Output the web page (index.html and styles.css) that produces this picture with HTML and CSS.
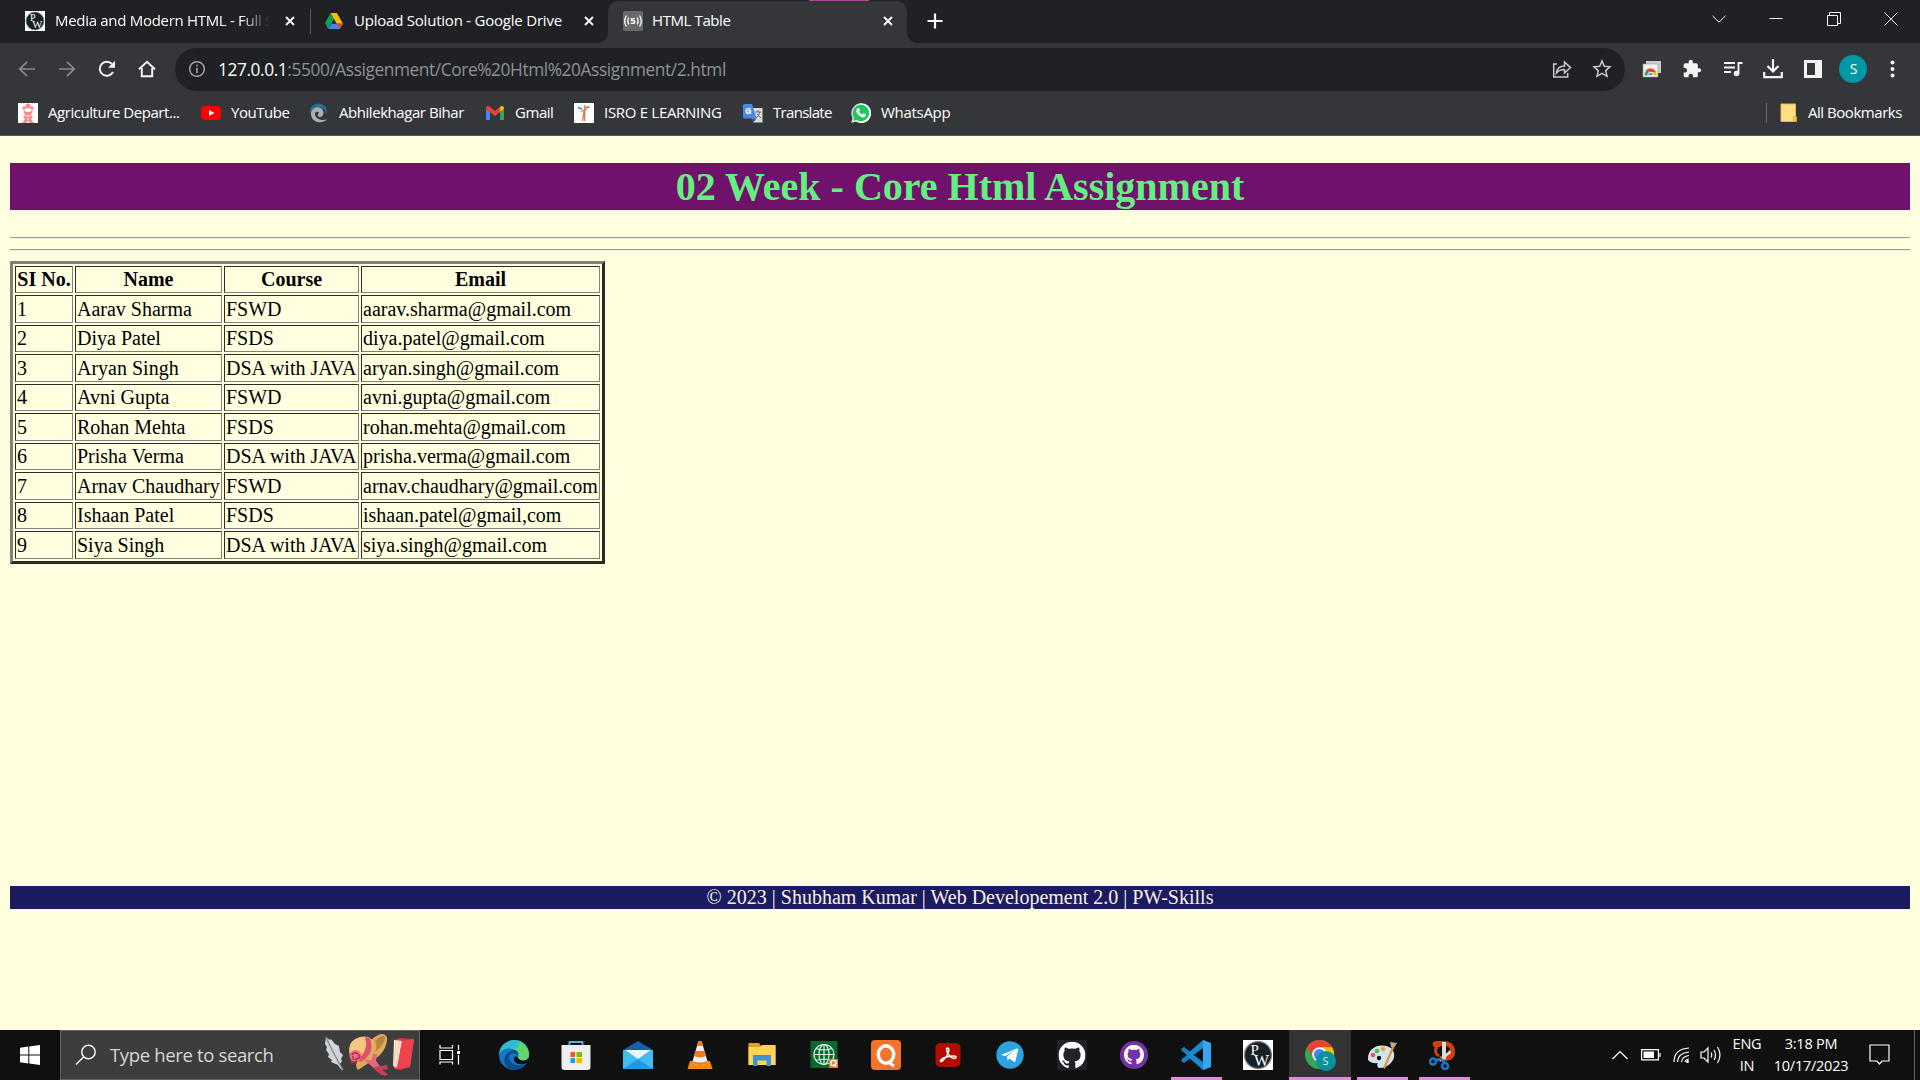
FILE: index.html
```html
<!DOCTYPE html>
<html lang="en">
<head>
<meta charset="utf-8">
<title>HTML Table</title>
<link rel="stylesheet" href="styles.css">
</head>
<body>
<svg class="defs" width="0" height="0" aria-hidden="true">
  <symbol id="pw" viewBox="0 0 30 30"><path fill="#fff" d="M0 0h30v30H0z"/><circle cx="15" cy="15" r="13.4" fill="#172026" stroke="#777" stroke-width="1.3"/><text x="7.500" y="14.500" class="pw-letter" font-size="15">P</text><text x="11" y="25.500" class="pw-letter" font-size="16">W</text></symbol>
  <symbol id="close" viewBox="0 0 10 10"><path d="M1 1l8 8M9 1L1 9" stroke="currentColor" stroke-width="1.8" fill="none"/></symbol>
  <symbol id="github" viewBox="0 0 16 16"><path fill="#fff" d="M8 0C3.58 0 0 3.58 0 8c0 3.54 2.29 6.53 5.47 7.59.4.07.55-.17.55-.38v-1.33c-2.23.48-2.7-1.07-2.7-1.07-.36-.93-.89-1.17-.89-1.17-.73-.5.05-.49.05-.49.8.06 1.23.83 1.23.83.71 1.22 1.87.87 2.33.66.07-.52.28-.87.5-1.07-1.77-.2-3.64-.89-3.64-3.95 0-.87.31-1.59.82-2.15-.08-.2-.36-1.02.08-2.12 0 0 .67-.21 2.2.82a7.6 7.6 0 0 1 4 0c1.53-1.04 2.2-.82 2.2-.82.44 1.1.16 1.92.08 2.12.51.56.82 1.27.82 2.15 0 3.07-1.87 3.75-3.65 3.95.29.25.54.73.54 1.48v2.16c0 .21.15.46.55.38A8 8 0 0 0 16 8c0-4.42-3.58-8-8-8z"/></symbol>
  <symbol id="chrome" viewBox="0 0 32 32"><circle cx="16" cy="16" r="15" fill="#34a853"/><path fill="#ea4335" d="M3 8.5A15 15 0 0 1 29 8.5H16L9.5 19.7z"/><path fill="#fbbc04" d="M29 8.5A15 15 0 0 1 16 31l6.5-11.3L16 8.5z"/><circle cx="16" cy="16" r="7.5" fill="#fff"/><circle cx="16" cy="16" r="5.8" fill="#4285f4"/></symbol>
</svg>

<header class="browser">
  <div class="tabstrip">
    <div class="tab tab-one">
      <svg width="20" height="20"><use href="#pw"/></svg>
      <span class="tab-title fade">Media and Modern HTML - Full S</span>
      <svg class="tab-close" width="10" height="10"><use href="#close"/></svg>
    </div>
    <div class="tab tab-two">
      <svg width="20" height="20" viewBox="0 0 20 20"><path fill="#0f9d58" d="M6.7 2L1 12l3.2 6L10 7.7z"/><path fill="#fbbc04" d="M6.7 2h6.2l6.1 10.7h-6.3z"/><path fill="#4285f4" d="M4.2 18L7.4 12.7H19L15.8 18z"/><path fill="#ea4335" d="M19 12.7L15.8 18l-3.1-5.3z"/></svg>
      <span class="tab-title t2">Upload Solution - Google Drive</span>
      <svg class="tab-close" width="10" height="10"><use href="#close"/></svg>
    </div>
    <div class="tab tab-active">
      <svg width="20" height="20" viewBox="0 0 20 20"><rect width="20" height="20" rx="2" fill="#696969"/><text x="7.2" y="13.200" font-size="9.500" font-weight="700" fill="#fff">5</text><path d="M5.800 6.500q-1.800 3.500 0 7M14.200 6.500q1.800 3.500 0 7M3.500 4.500q-3.700 5.500 0 11M16.500 4.500q3.700 5.500 0 11" fill="none" stroke="#fff" stroke-width="1.300"/></svg>
      <span class="tab-title t3">HTML Table</span>
      <svg class="tab-close" width="10" height="10"><use href="#close"/></svg>
      <i class="accent"></i>
    </div>
    <svg class="new-tab" width="16" height="16" viewBox="0 0 16 16"><path d="M8 .5v15M.5 8h15" stroke="#fff" stroke-width="2.2"/></svg>
    <div class="window-controls">
      <svg width="14" height="14" viewBox="0 0 14 14"><path d="M.5 3.8L7 10.2l6.500-6.400"/></svg>
      <svg width="14" height="14" viewBox="0 0 14 14"><path d="M.5 6.500h13"/></svg>
      <svg width="14" height="14" viewBox="0 0 14 14"><path d="M.5 3.500h10v10H.5zM2.500 3.500v-3h11v11h-3"/></svg>
      <svg width="14" height="14" viewBox="0 0 14 14"><path d="M.5.5l13 13M13.500.5l-13 13"/></svg>
    </div>
  </div>

  <div class="toolbar">
    <nav class="nav">
      <svg class="dim" width="18" height="18" viewBox="0 0 18 18"><path d="M17 9H2M9 1.800L1.800 9 9 16.200"/></svg>
      <svg class="dim" width="18" height="18" viewBox="0 0 18 18"><path d="M1 9h15M9 1.800L16.200 9 9 16.200"/></svg>
      <svg width="18" height="18" viewBox="0 0 18 18"><path d="M15 12a7 7 0 1 1-1-8"/><path class="solid" d="M17 .8v7h-7z"/></svg>
      <svg width="18" height="18" viewBox="0 0 18 18"><path d="M1 9.200L9 1.800l8 7.400M3.800 8v8.300h10.400V8"/></svg>
    </nav>
    <div class="omnibox">
      <svg width="18" height="18" viewBox="0 0 18 18"><circle cx="9" cy="9" r="7.300" fill="none" stroke="#a0a3a8" stroke-width="1.500"/><path d="M9 8v5M9 4.800v1.700" stroke="#a0a3a8" stroke-width="1.700"/></svg>
      <span class="url"><b>127.0.0.1</b>:5500/Assigenment/Core%20Html%20Assignment/2.html</span>
      <svg class="share" width="20" height="20" viewBox="0 0 20 20"><path d="M5 5H1.700v13h14v-4M4.500 14c.5-4.500 3.500-7 8-7V3l6 5.600-6 5.400v-3.500c-3.800 0-6 .8-8 3.500z"/></svg>
      <svg width="20" height="20" viewBox="0 0 20 20"><path d="M10 2l2.300 5.300 5.700.5-4.300 3.800 1.300 5.700-5-3-5 3 1.300-5.700L2 7.800l5.700-.5z"/></svg>
    </div>
    <div class="actions">
      <svg width="20" height="20" viewBox="0 0 20 20"><path d="M4 2h15v12H4z" fill="#ccc"/><path d="M1 5h15v13H1z" fill="#f2f2f2" stroke="#999" stroke-width=".6"/><path d="M2.500 16.500a6 6 0 0 1 3-5.500l3 5.500z" fill="#34a853"/><path d="M3.500 12a6 6 0 0 1 10.500 1H8.500z" fill="#ea4335"/><path d="M14 13q1 1.500.8 3.500h-5l-1-3.500z" fill="#fbbc04"/><path d="M5.700 16.500a3 3 0 0 1 6 0z" fill="#4285f4" stroke="#fff"/></svg>
      <svg width="20" height="20" viewBox="0 0 24 24"><path fill="#f1f3f4" d="M20.500 11H19V7a2 2 0 0 0-2-2h-4V3.500a2.500 2.500 0 0 0-5 0V5H4a2 2 0 0 0-2 2v3.800h1.500a2.700 2.700 0 0 1 0 5.400H2V20a2 2 0 0 0 2 2h3.800v-1.500a2.700 2.700 0 0 1 5.400 0V22H17a2 2 0 0 0 2-2v-4h1.500a2.500 2.500 0 0 0 0-5z"/></svg>
      <svg width="20" height="20" viewBox="0 0 20 20"><path d="M1 4h11M1 8.500h11M1 13h7M15.500 14V4h4" fill="none" stroke="#f1f3f4" stroke-width="1.900"/><circle cx="13.500" cy="14.500" r="2.800" fill="#f1f3f4"/></svg>
      <svg width="20" height="20" viewBox="0 0 20 20"><path d="M10 0v12M4.500 7l5.500 5.500L15.500 7M1.200 13v5.200h17.600V13" fill="none" stroke="#f1f3f4" stroke-width="2.200"/></svg>
      <svg width="20" height="20" viewBox="0 0 20 20"><path d="M1 1h18v18H1z" fill="#f1f3f4"/><path d="M4 4h8v12H4z" fill="#35363a"/></svg>
      <span class="avatar">S</span>
      <svg width="20" height="20" viewBox="0 0 20 20" fill="#f1f3f4"><circle cx="8.500" cy="3.500" r="2"/><circle cx="8.500" cy="10" r="2"/><circle cx="8.500" cy="16.500" r="2"/></svg>
    </div>
  </div>

  <div class="bookmarks">
    <span class="bm b1"><svg width="20" height="20" viewBox="0 0 20 20"><path fill="#fff" d="M0 0h20v20H0z"/><g fill="#f88b8b"><circle cx="10" cy="3" r="2.500"/><circle cx="6" cy="5" r="1.800"/><circle cx="14" cy="5" r="1.800"/><path d="M5 7q5 3 10 0l-2 5 2 2-2 2 3 4h-4l-2-2-2 2H4l3-4-2-2 2-2z"/></g><path d="M8 8.500h4M7.500 13h5M9 16h2" stroke="#fff"/></svg><span>Agriculture Depart...</span></span>
    <span class="bm b2"><svg width="20" height="20" viewBox="0 0 20 20"><rect y="3" width="20" height="14" rx="4" fill="#f00"/><path d="M8 7l5.500 3L8 13z" fill="#fff"/></svg><span>YouTube</span></span>
    <span class="bm b3"><svg width="20" height="20" viewBox="0 0 20 20"><path d="M1 12C-1 2 9-3 16 3q3 4 1 9 0-6-5-7.500Q3 3 1 12z" fill="#286d97"/><path d="M18 16.500C12 22 2 19 2 11 2 5 9 2 13 6c3 4 1 8-2 8-3 0-3-4-.5-4C8 7.500 5.500 9 6 12c1 4 7 6 12 4.500z" fill="#a9afb3"/></svg><span>Abhilekhagar Bihar</span></span>
    <span class="bm b4"><svg width="20" height="20" viewBox="0 0 20 20"><path fill="#4285f4" d="M1 6v11h4V9z"/><path fill="#34a853" d="M15 9v8h4V6z"/><path fill="#ea4335" d="M1 4.500Q2.500 2 5 4l5 4 5-4v5l-5 4-5-4-4-3z"/><path fill="#fbbc04" d="M15 4q2.500-2 4 .500V6l-4 3z"/></svg><span>Gmail</span></span>
    <span class="bm b5"><svg width="20" height="20" viewBox="0 0 20 20"><path fill="#fff" d="M0 0h20v20H0z"/><path d="M8.500 18L11 2l-.5 16M7 8.500l6-2.500" fill="none" stroke="#ed7244" stroke-width="1.300"/><path d="M4 4.500l4 1.500M12 4.500l3.500-.5" stroke="#3489b9" stroke-width="1.500"/></svg><span>ISRO E LEARNING</span></span>
    <span class="bm b6"><svg width="20" height="20" viewBox="0 0 20 20"><path d="M9 5h10.500v14.500H10z" fill="#dadce0"/><path d="M1.500 1H9l4.500 14.500H1.500A1.500 1.500 0 0 1 0 14V2.500A1.500 1.500 0 0 1 1.500 1z" fill="#4b86e8"/><path d="M13.500 15.500l-3 4-1-4z" fill="#2456a6"/><path d="M12 9h6M15 7v2M17 9q-1 4-4 6M14 11l4 4" stroke="#667" fill="none"/><text x="2" y="11" font-size="9" font-weight="700" fill="#fff">G</text></svg><span>Translate</span></span>
    <span class="bm b7"><svg width="20" height="20" viewBox="0 0 20 20"><path d="M.3 19.700L1.700 15A9.900 9.900 0 1 1 5 18.500z" fill="#fff"/><path d="M2 18l1-3.300A8.300 8.300 0 1 1 5.400 17z" fill="#1fc659"/><path d="M6.500 5.300q1-.8 1.600 0l.9 2-.9 1.300q1 2 3.200 3l1.400-1.400 2.300 1.100q0 2.700-2.800 3.200C8.500 14 5 10.500 5.400 7.300q.2-1.400 1.100-2z" fill="#fff"/></svg><span>WhatsApp</span></span>
    <span class="bm all"><svg width="20" height="20" viewBox="0 0 20 20"><path d="M1 1h14.500v17.500H1z" fill="#fce083" stroke="#e6bd4a"/><path d="M13.500 18.500v-5h3v5z" fill="#f3ca57" stroke="#d4a72d" stroke-width=".7"/></svg><span>All Bookmarks</span></span>
  </div>
</header>

<main class="page">
  <h1>02 Week - Core Html Assignment</h1>
  <hr>
  <hr>
  <table>
    <colgroup><col class="c-no"><col class="c-name"><col class="c-course"><col class="c-email"></colgroup>
    <tr><th>SI No.</th><th>Name</th><th>Course</th><th>Email</th></tr>
    <tr><td>1</td><td>Aarav Sharma</td><td>FSWD</td><td>aarav.sharma@gmail.com</td></tr>
    <tr><td>2</td><td>Diya Patel</td><td>FSDS</td><td>diya.patel@gmail.com</td></tr>
    <tr><td>3</td><td>Aryan Singh</td><td>DSA with JAVA</td><td>aryan.singh@gmail.com</td></tr>
    <tr><td>4</td><td>Avni Gupta</td><td>FSWD</td><td>avni.gupta@gmail.com</td></tr>
    <tr><td>5</td><td>Rohan Mehta</td><td>FSDS</td><td>rohan.mehta@gmail.com</td></tr>
    <tr><td>6</td><td>Prisha Verma</td><td>DSA with JAVA</td><td>prisha.verma@gmail.com</td></tr>
    <tr><td>7</td><td>Arnav Chaudhary</td><td>FSWD</td><td>arnav.chaudhary@gmail.com</td></tr>
    <tr><td>8</td><td>Ishaan Patel</td><td>FSDS</td><td>ishaan.patel@gmail,com</td></tr>
    <tr><td>9</td><td>Siya Singh</td><td>DSA with JAVA</td><td>siya.singh@gmail.com</td></tr>
  </table>
  <footer>© 2023 | Shubham Kumar | Web Developement 2.0 | PW-Skills</footer>
</main>

<div class="taskbar">
  <div class="start"><svg width="20" height="20" viewBox="0 0 20 20" fill="#fff"><path d="M0 2.800L8.300 1.600v7.900H0zM9.300 1.400L20 0v9.500H9.300zM0 10.500h8.300v7.900L0 17.200zM9.300 10.500H20V20L9.300 18.600z"/></svg></div>
  <div class="search">
    <svg width="22" height="22" viewBox="0 0 22 22"><circle cx="13.500" cy="8" r="6.700"/><path d="M8.800 12.800L1 20.500"/></svg>
    <span>Type here to search</span>
    <svg class="doodle" width="92" height="44" viewBox="0 0 92 44">
      <path d="M3 4l4 3 1-1 4 5 4 2 1 6 3 3-2 4 1 2-2 3 2 7-4-6-7-3 1-2-4-3 1-3-3-4 1-3-2-3z" fill="#d2d4d8"/><path d="M3 4q6 14 17 33" stroke="#888c93" fill="none"/>
      <path d="M35 37Q30 31 38 25 50 18 48 7 60-3 64 4 65 14 56 23 44 31 35 37z" fill="#e0aa5c"/><path d="M52 8q8-8 10-4 0 7-10 15 3-7 0-11z" fill="#b98240"/>
      <path d="M27 23Q23 8 37 4 47 2 50 9 50 20 38 27 31 29 27 23z" fill="#f3c780"/><path d="M34 27Q46 18 42 4l5 1Q53 19 38 29z" fill="#dc5468"/>
      <path d="M40 26l7 1 16 14-4 1zM54 21l-1 7 7 9-3 1-9-10 2-7z" fill="#e36a7e"/><path d="M51 34l13-2 1 4-6 1 6 4-3 2-9-5z" fill="#c93e5c"/><circle cx="32.500" cy="23" r="6" fill="#ef6d83"/><path d="M29 22q2-4 6-1t-1 5-4-3M27 28q3 3 7 0" stroke="#b62c4b" fill="none"/>
      <path d="M71 7l6-2 14 1-4 28-9 3-7-1z" fill="#dd323b"/><path d="M71 7l8 1-5 27-4-2z" fill="#fff0dc"/><path d="M73 8l-2 25M76 8l-3 26" stroke="#d9a98a" stroke-width=".7"/><path d="M79 8l12-2-4 28-13 2z" fill="#ef4450"/>
    </svg>
  </div>
  <div class="taskview"><svg width="22" height="20" viewBox="0 0 22 20" fill="none" stroke="#fff" stroke-width="1.200"><path d="M1 0v3h12.500V0M1 5.500h12.500v9H1zM1 19.500v-2.500h12.500v2.500M19.500 0v5M19.500 10v9.500"/><path d="M18 6h3v3h-3z" fill="#fff" stroke="none"/></svg></div>

  <div class="apps">
    <span><svg width="30" height="30" viewBox="0 0 30 30"><circle cx="15" cy="15" r="15" fill="#1675c4"/><path d="M0 14C2-4 29-5 30 14c0 7-9 7-11 4 2-9-12-14-19-4z" fill="#33bccf"/><path d="M18 1c8 2 13 9 12 15-2 6-10 5-11 2 3-3 0-8-4-9 5-1 7-4 3-8z" fill="#63d46b"/><path d="M10 17c1 8 10 11 18 6-4 7-13 9-20 4-6-7-1-16 7-17 3 0 5 3 4 6-2-4-9-3-9 1z" fill="#0b4d8d"/><path d="M19 18c2 3 7 4 11 0l-2 5c-7 3-14 0-13-5l2-2z" fill="#101010"/></svg></span>
    <span><svg width="30" height="30" viewBox="0 0 30 30"><path d="M8.500 7V2h13v5" fill="none" stroke="#45b4e4" stroke-width="1.800"/><path d="M.5 5h29v22q0 3-3 3h-23q-3 0-3-3z" fill="#eee"/><path d="M9.500 12H14v5H9.500z" fill="#f25022"/><path d="M15.500 12H21v5h-5.500z" fill="#7fba00"/><path d="M9.500 18H14v5H9.500z" fill="#00a4ef"/><path d="M15.500 18H21v5h-5.500z" fill="#ffb900"/></svg></span>
    <span><svg width="30" height="30" viewBox="0 0 30 30"><path d="M0 10L15 1l15 9v6H0z" fill="#1161ad"/><path d="M2 10h26L15 20z" fill="#f1f3f5"/><path d="M0 10l2 0 13 9 13-9h2v19H0z" fill="#42bdf1"/><path d="M15 19l15 10H0z" fill="#219be0"/></svg></span>
    <span><svg width="30" height="30" viewBox="0 0 30 30"><path d="M5 21h20l2.500 8h-25z" fill="#f28a0d"/><path d="M13.500 1h3L23 23q-8 4-16 0z" fill="#eee"/><path d="M13.500 1h3l1.500 5h-6zM10.500 11h9l1.500 5q-6 2.500-12 0zM7 23q8 4 16 0l-.6-2q-7.500 3-14.800 0z" fill="#f47b12"/></svg></span>
    <span><svg width="30" height="30" viewBox="0 0 30 30"><path d="M1.500 3H12l2 3h14.500v19h-27z" fill="#e0a11b"/><path d="M1.500 7H13l2-2h13.500v20h-27z" fill="#ffd35b"/><path d="M6 26V15h18v11h-4.500v-5.500h-9V26z" fill="#3d96d2"/></svg></span>
    <span><svg width="30" height="30" viewBox="0 0 30 30"><path d="M1.500 1h27v27h-27z" fill="#08682c"/><g fill="none" stroke="#e6f2e8" stroke-width="1.200"><circle cx="15" cy="14.500" r="10"/><ellipse cx="15" cy="14.500" rx="5" ry="10"/><path d="M15 4.500v20M5 14.500h20M7 8.500q8 3 16 0M7 20.500q8-3 16 0"/></g><path d="M20 19h9v9h-9z" fill="#f27a34"/><circle cx="24.500" cy="23" r="2.600" fill="none" stroke="#fff" stroke-width="1.400"/><path d="M25 24l2 2.500" stroke="#fff" stroke-width="1.400"/></svg></span>
    <span><svg width="30" height="30" viewBox="0 0 30 30"><rect width="30" height="30" rx="4" fill="#f37328"/><ellipse cx="15" cy="14.500" rx="7.700" ry="8.700" fill="none" stroke="#fff" stroke-width="3.500"/><path d="M17 22l6 4" stroke="#fff" stroke-width="3"/></svg></span>
    <span><svg width="30" height="30" viewBox="0 0 30 30"><rect x="2.500" y="3" width="25" height="24" rx="5" fill="#b30b00"/><path d="M14.500 8c3 0 1 8-5 13-4 2-2-3 4-4 7-2 11-1 9 1-4 2-9-5-9-9 0-1 .500-1 1-1z" fill="none" stroke="#fff" stroke-width="1.500"/></svg></span>
    <span><svg width="30" height="30" viewBox="0 0 30 30"><circle cx="15" cy="15" r="13.700" fill="#2ca2df"/><path d="M6 15l16-6.500q1.500-.5 1 1.500l-2.500 11q-.5 1.500-2 .5l-4-3-2 2-.5-4 7.500-6.500-9 6z" fill="#fff"/></svg></span>
    <span><svg width="30" height="30" viewBox="0 0 30 30"><path d="M0 0h30v30H0z" fill="#24212a"/><use href="#github" x="1.500" y="1.800" width="27" height="27"/></svg></span>
    <span><svg width="30" height="30" viewBox="0 0 30 30"><circle cx="15" cy="15" r="14" fill="#7532a2"/><use href="#github" x="5" y="4.800" width="20" height="20"/></svg></span>
    <span class="open"><svg width="30" height="30" viewBox="0 0 30 30"><path d="M0 9l3-2 21 16v7L1 11zM0 21l3 2L24 7V0L1 19z" fill="#167fc5"/><path d="M22 0l8 3v24l-8 3z" fill="#36a5ef"/><path d="M22 0v8L12 15l10 7v8L6 16v-2z" fill="#168bd4"/><path d="M22 8v14l-9-7z" fill="#101010"/></svg></span>
    <span><svg width="30" height="30"><use href="#pw"/></svg></span>
    <span class="current"><svg width="32" height="32" viewBox="0 0 32 32"><use href="#chrome" width="31" height="31"/><circle cx="22" cy="22" r="10" fill="#07919a"/><text x="18.500" y="26" font-size="11" fill="#d4f1f2">S</text></svg></span>
    <span class="open"><svg width="30" height="30" viewBox="0 0 30 30"><path d="M1 20C0 7 14 2 24 8c8 8 0 20-12 20q-3-2-1-5-6 1-10-3z" fill="#cfe6f2"/><circle cx="6" cy="15" r="2.300" fill="#e9534b"/><circle cx="10" cy="11" r="2.300" fill="#57b947"/><circle cx="16" cy="9" r="2.300" fill="#f6a43a"/><circle cx="12" cy="18" r="2.200" fill="#101010"/><path d="M16 28L25 7l2 1-9 21z" fill="#e29435"/><path d="M23 2l7 1-3 5-3-1z" fill="#c4a77b"/></svg></span>
    <span class="open"><svg width="30" height="30" viewBox="0 0 30 30"><path d="M5 7Q0 0 11 1 25 0 26 10 27 21 15 21l-5-2 1-3q10 2 10-6-1-5-9-4-4 3-7 1z" fill="#d1410c"/><path d="M8 7q-4 5 2 9" fill="none" stroke="#d1410c" stroke-width="3"/><path d="M13 2l4 0v17l-4 3zM21 10l1 3-11 9-1-2z" fill="#d8dadc"/><circle cx="4" cy="21.500" r="3" fill="none" stroke="#1877c9" stroke-width="2.500"/><circle cx="16" cy="26" r="3" fill="none" stroke="#1877c9" stroke-width="2.500"/><path d="M7 20l6-1M15 23l-1-4" stroke="#1877c9" stroke-width="2.500"/></svg></span>
  </div>

  <div class="tray">
    <svg width="18" height="12" viewBox="0 0 18 12"><path d="M1.500 10L9 2.500 16.500 10"/></svg>
    <svg class="battery" width="20" height="12" viewBox="0 0 20 12"><path d="M.6.600h16.800v10.300H.6zM19 4v4"/><path d="M2.500 2.500h10.500v6.500H2.500z" fill="#fff" stroke="none"/></svg>
    <svg class="wifi" width="18" height="18" viewBox="0 0 18 18"><path d="M1 16Q1 3 16 2M4.500 16Q5 7 16 6M8.500 16q.500-5.500 7.500-6.500M12 16q0-2.500 4-3"/><circle cx="14.500" cy="15.500" r="1.500" fill="#fff" stroke="none"/></svg>
    <svg class="volume" width="22" height="20" viewBox="0 0 22 20"><path d="M1 7h3l4-4v14l-4-4H1zM11 7.500q1.500 2.500 0 5M14 5q3 5 0 10M17.500 2q5 8 0 16"/></svg>
    <div class="lang"><span>ENG</span><span>IN</span></div>
    <div class="clock"><span>3:18 PM</span><span class="date">10/17/2023</span></div>
    <svg class="notice" width="22" height="22" viewBox="0 0 22 22"><path d="M1 1h19v16h-7l-2.500 3L8 17H1z"/></svg>
  </div>
</div>
</body>
</html>
```
FILE: styles.css
```css
* { box-sizing: border-box; }
body {
  margin: 0;
  width: 1920px;
  height: 1080px;
  overflow: hidden;
  display: flex;
  flex-direction: column;
  background: #ffffe0;
  font-family: "Open Sans", "Noto Sans", sans-serif;
}
svg { flex: none; display: block; }
.defs { position: absolute; }
.pw-letter { font-family: "Liberation Serif", serif; fill: #fff; }

/* browser chrome */
.browser {
  height: 136px;
  flex: none;
  background: #35363a;
  border-bottom: 1px solid #57585c;
  color: #fff;
  font-size: 15px;
}
.tabstrip { display: flex; height: 43px; background: #202124; }
.tab { display: flex; align-items: center; height: 42px; white-space: nowrap; }
.tab-title { flex: 1; margin-left: 10px; padding-bottom: 2px; overflow: hidden; }
.tab-one { width: 310px; padding: 0 15px 0 25px; }
.tab-one .tab-close { margin-left: 15px; }
.fade { letter-spacing: -.3px; -webkit-mask-image: linear-gradient(90deg, #000 86%, transparent); mask-image: linear-gradient(90deg, #000 86%, transparent); }
.tab-two { width: 298px; padding: 0 14px 0 14px; position: relative; }
.tab-two::before { content: ""; position: absolute; left: 0; top: 9px; width: 1px; height: 25px; background: #5a5b5f; }
.t2 { letter-spacing: -.22px; }
.tab-active {
  position: relative;
  width: 299px;
  height: 42px;
  margin-top: 1px;
  padding: 0 14px 2px 15px;
  border-radius: 10px 10px 0 0;
  background: #35363a;
}
.tab-active::before, .tab-active::after {
  content: "";
  position: absolute;
  bottom: 0;
  width: 10px;
  height: 10px;
}
.tab-active::before { left: -10px; background: radial-gradient(circle at 0 0, transparent 9.5px, #35363a 10px); }
.tab-active::after { right: -10px; background: radial-gradient(circle at 100% 0, transparent 9.5px, #35363a 10px); }
.t3 { margin-left: 9px; letter-spacing: -.4px; }
.accent { position: absolute; left: 201px; top: -1px; width: 60px; height: 1px; background: #a34e9d; }
.new-tab { margin: 13px 0 0 20px; }
.window-controls { display: flex; margin-left: auto; padding: 12px 22px 0 0; gap: 43.5px; fill: none; stroke: #f4f4f4; stroke-width: 1; }

.toolbar { display: flex; align-items: center; height: 52px; }
.nav { display: flex; width: 175px; padding-left: 18px; gap: 22.100px; fill: none; stroke: #f1f3f4; stroke-width: 2; }
.nav .dim { stroke: #898a8d; stroke-width: 1.700; }
.nav .solid { fill: #f1f3f4; stroke: none; }
.omnibox {
  display: flex;
  align-items: center;
  width: 1450px;
  height: 43px;
  padding: 0 13px;
  border-radius: 22px;
  background: #202124;
  fill: none;
  stroke: #c7c9cc;
  stroke-width: 1.500;
}
.url { margin-left: 12px; font-size: 17.300px; color: #8e9195; letter-spacing: -.4px; white-space: nowrap; }
.url b { font-weight: 400; color: #fff; }
.share { margin: 0 20px 0 auto; }
.actions { display: flex; align-items: center; padding-left: 17px; gap: 20.300px; }
.avatar { width: 28px; height: 28px; margin: 0 -4px; border-radius: 50%; background: #0097a7; font-size: 14px; line-height: 28px; text-align: center; }

.bookmarks { display: flex; height: 36px; padding-left: 18px; }
.bm { display: flex; align-items: center; gap: 10px; white-space: nowrap; flex: none; letter-spacing: -.45px; }
.bm > span { padding-bottom: 2px; }
.b1 { width: 183px; }
.b2 { width: 108px; }
.b3 { width: 176px; }
.b4 { width: 89px; }
.b5 { width: 169px; letter-spacing: -.3px; }
.b6 { width: 108px; letter-spacing: -.7px; }
.b7 { letter-spacing: -.3px; }
.all { margin-left: auto; padding-right: 18px; }
.all::before { content: ""; width: 1px; height: 20px; margin-right: 3px; background: #6b6c70; }
.all svg { margin-right: -2px; }

/* document */
.page { height: 894px; padding: 27px 10px 0; font-family: "Liberation Serif", serif; font-size: 20px; }
h1 { margin: 0 0 27px; height: 47px; line-height: 47px; background: #70116b; color: #64f080; font-size: 40px; text-align: center; }
hr { margin: 0 0 10px; height: 2px; border: 0; border-top: 1px solid #9a9a9a; border-bottom: 1px solid #eeeeee; }
table { table-layout: fixed; width: 595px; height: 303px; border: 3px solid; border-color: #808080 #2c2c25 #2c2c25 #808080; border-spacing: 2px; }
.c-no { width: 58px; }
.c-name { width: 147px; }
.c-course { width: 135px; }
.c-email { width: 239px; }
th, td { height: 27px; padding: 0 1px; border: 1px solid; border-color: #2c2c25 #808080 #808080 #2c2c25; line-height: 25px; white-space: nowrap; }
tr:nth-child(even) td { height: 28px; line-height: 26px; }
footer { margin-top: 322px; height: 23px; line-height: 23px; background: #1b1b60; color: #faf0e6; text-align: center; }

/* taskbar */
.taskbar { display: flex; height: 50px; flex: none; background: #101010; color: #fff; }
.start { width: 60px; padding: 15px 20px; }
.search { display: flex; align-items: center; width: 360px; padding-left: 14px; border: 1px solid #626262; background: #3d3d3d; fill: none; stroke: #f1f1f1; stroke-width: 1.500; font-size: 18.500px; color: #d6d6d6; }
.search span { margin-left: 13px; padding-bottom: 1px; letter-spacing: -.35px; white-space: nowrap; }
.search .doodle { margin: 0 4px 0 auto; stroke: none; }
.taskview { width: 63px; padding: 15px 0 0 19px; }
.apps { display: flex; }
.apps span { display: flex; align-items: center; justify-content: center; width: 62px; height: 50px; }
.apps .open { background: linear-gradient(#e08bd5, #e08bd5) center bottom / 51px 3px no-repeat; }
.apps .current { background: #343434; border-bottom: 3px solid #e08bd5; padding-top: 3px; }
.tray { display: flex; align-items: center; flex: 1; padding-left: 136px; margin-right: 5px; border-right: 1px solid #606060; fill: none; stroke: #fff; stroke-width: 1.200; font-size: 14.500px; letter-spacing: -.25px; }
.battery { margin-left: 12px; }
.wifi { margin-left: 12px; }
.volume { margin-left: 9px; }
.lang, .clock { display: flex; flex-direction: column; align-items: center; line-height: 22px; }
.lang { width: 50px; }
.clock { width: 76px; margin-left: 1px; }
.notice { margin-left: 20px; }
```
